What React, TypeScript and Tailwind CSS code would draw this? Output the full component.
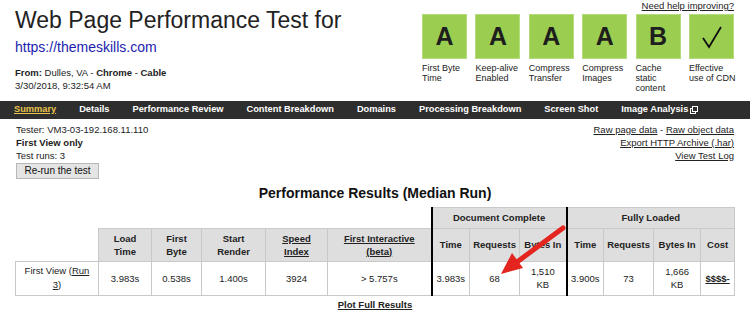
import React from "react";

const grades = [
  { g: "A", l: ["First Byte", "Time"] },
  { g: "A", l: ["Keep-alive", "Enabled"] },
  { g: "A", l: ["Compress", "Transfer"] },
  { g: "A", l: ["Compress", "Images"] },
  { g: "B", l: ["Cache", "static", "content"] },
  { g: "check", l: ["Effective", "use of CDN"] },
];

const nav = [
  "Summary",
  "Details",
  "Performance Review",
  "Content Breakdown",
  "Domains",
  "Processing Breakdown",
  "Screen Shot",
  "Image Analysis",
];

const th = "bg-[#dedede] border border-[#c9c9c9] font-bold text-center align-middle leading-[13px] px-[1px] whitespace-nowrap";
const td = "border border-[#c9c9c9] text-center align-middle leading-[13px] px-[2px]";
const thick = " border-l-2 border-l-black";

export default function App() {
  return (
    <div className="relative w-[750px] h-[314px] overflow-hidden bg-white text-[#222] font-['Liberation_Sans',Arial,sans-serif]">
      <div className="flex justify-between">
        <div className="pl-[15px] pt-[7px]">
          <h1 className="text-[23px] leading-[26px] text-[#222]">Web Page Performance Test for</h1>
          <a className="block mt-[6px] text-[14px] leading-[16px] text-[#1c1cae]">https://themeskills.com</a>
          <div className="mt-[11px] text-[9.5px] leading-[13px]">
            <div>
              <b>From:</b> Dulles, VA - <b>Chrome</b> - <b>Cable</b>
            </div>
            <div>3/30/2018, 9:32:54 AM</div>
          </div>
        </div>
        <div className="pr-[16px] flex flex-col items-end">
          <a className="text-[9.5px] leading-[12px] underline text-[#222]">Need help improving?</a>
          <div className="flex gap-[8.4px] mt-[2px]">
            {grades.map((x, i) => (
              <div key={i} className="w-[45px]">
                <div className="h-[45px] bg-[#9acd50] border border-[#b4db7c] flex items-center justify-center text-[25px] font-bold text-[#1e1e1e]">
                  {x.g === "check" ? (
                    <svg width="22" height="24" viewBox="0 0 22 24">
                      <path d="M2 13 L8 22 L20 2" fill="none" stroke="#111" strokeWidth="1.8" strokeLinejoin="miter" />
                    </svg>
                  ) : (
                    x.g
                  )}
                </div>
                <div className="mt-[3.5px] text-[9px] leading-[10px] text-[#222]">
                  {x.l.map((t, j) => (
                    <div key={j} className="whitespace-nowrap">{t}</div>
                  ))}
                </div>
              </div>
            ))}
          </div>
        </div>
      </div>

      <div className="mt-[8px] h-[18px] bg-[#2e2e2e] flex items-center gap-[23px] pl-[14px] text-[9.25px] font-bold text-white">
        {nav.map((n, i) => (
          <span
            key={n}
            className={
              i === 0
                ? "text-[#e9c24a] underline whitespace-nowrap"
                : "whitespace-nowrap flex items-center gap-[2px]"
            }
          >
            {n}
            {n === "Image Analysis" && (
              <svg width="8" height="8" viewBox="0 0 8 8">
                <rect x="0.5" y="2.5" width="5" height="5" fill="none" stroke="white" strokeWidth="1" />
                <rect x="2.5" y="0.5" width="5" height="5" fill="#2e2e2e" stroke="white" strokeWidth="1" />
              </svg>
            )}
          </span>
        ))}
      </div>

      <div className="flex justify-between px-[16px] pt-[4px] text-[9.5px] leading-[13px] text-[#222]">
        <div>
          <div>Tester: VM3-03-192.168.11.110</div>
          <div className="font-bold">First View only</div>
          <div>Test runs: 3</div>
          <button className="mt-[1px] w-[83px] h-[16px] bg-[#e4e4e4] border border-[#b8b8b8] text-[10px] leading-[14px] text-[#111]">
            Re-run the test
          </button>
        </div>
        <div className="text-right">
          <div>
            <a className="underline">Raw page data</a> - <a className="underline">Raw object data</a>
          </div>
          <div>
            <a className="underline">Export HTTP Archive (.har)</a>
          </div>
          <div>
            <a className="underline">View Test Log</a>
          </div>
        </div>
      </div>

      <h2 className="mt-[6px] text-center text-[14px] leading-[16px] font-bold text-[#111]">
        Performance Results (Median Run)
      </h2>

      <table className="mt-[6px] ml-[15px] w-[719px] table-fixed border-collapse text-[9.5px] text-[#222]">
        <colgroup>
          <col className="w-[83px]" />
          <col className="w-[53px]" />
          <col className="w-[50px]" />
          <col className="w-[64px]" />
          <col className="w-[62px]" />
          <col className="w-[104px]" />
          <col className="w-[38px]" />
          <col className="w-[50px]" />
          <col className="w-[47px]" />
          <col className="w-[37px]" />
          <col className="w-[50px]" />
          <col className="w-[47px]" />
          <col className="w-[34px]" />
        </colgroup>
        <tbody>
          <tr className="h-[21px]">
            <td colSpan={6} className="border-0"></td>
            <th colSpan={3} className={th + thick}>Document Complete</th>
            <th colSpan={4} className={th + thick}>Fully Loaded</th>
          </tr>
          <tr className="h-[33px]">
            <td className="border-0"></td>
            <th className={th}>Load<br />Time</th>
            <th className={th}>First<br />Byte</th>
            <th className={th}>Start<br />Render</th>
            <th className={th}><span className="underline">Speed<br />Index</span></th>
            <th className={th}><span className="underline">First Interactive<br />(beta)</span></th>
            <th className={th + thick}>Time</th>
            <th className={th}>Requests</th>
            <th className={th}>Bytes In</th>
            <th className={th + thick}>Time</th>
            <th className={th}>Requests</th>
            <th className={th}>Bytes In</th>
            <th className={th}>Cost</th>
          </tr>
          <tr className="h-[34px]">
            <td className={td + " px-[6px] leading-[14px]"}>
              First View (<a className="underline">Run 3</a>)
            </td>
            <td className={td}>3.983s</td>
            <td className={td}>0.538s</td>
            <td className={td}>1.400s</td>
            <td className={td}>3924</td>
            <td className={td}>&gt; 5.757s</td>
            <td className={td + thick}>3.983s</td>
            <td className={td}>68</td>
            <td className={td + " px-[6px]"}>1,510 KB</td>
            <td className={td + thick}>3.900s</td>
            <td className={td}>73</td>
            <td className={td + " px-[6px]"}>1,666 KB</td>
            <td className={td}>
              <a className="underline font-bold">$$$$-</a>
            </td>
          </tr>
        </tbody>
      </table>

      <div className="mt-[2px] text-center text-[9.5px] leading-[13px] font-bold">
        <a className="underline text-[#222]">Plot Full Results</a>
      </div>

      <svg className="absolute inset-0 pointer-events-none" width="750" height="314" viewBox="0 0 750 314">
        <line x1="563" y1="228" x2="517" y2="262" stroke="#e3241f" strokeWidth="5" strokeLinecap="round" />
        <polygon points="501,274 523,268 512,253" fill="#e3241f" />
      </svg>
    </div>
  );
}
